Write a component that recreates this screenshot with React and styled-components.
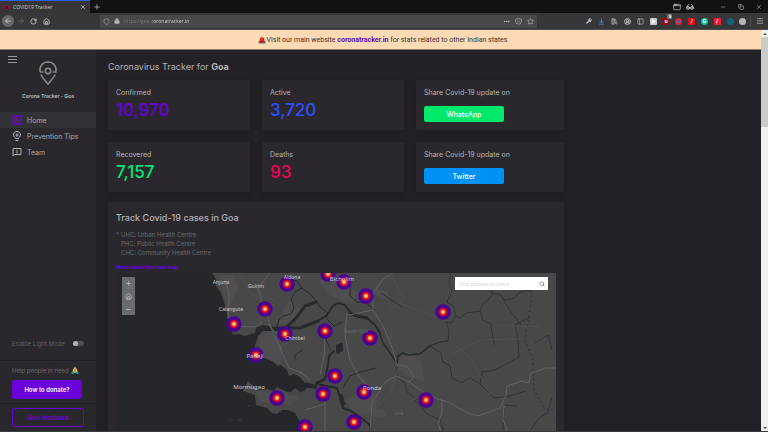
import React, { useState } from 'react';
import styled, { createGlobalStyle, css } from 'styled-components';
import {
  ArrowLeft,
  ArrowRight,
  RotateCw,
  House,
  Shield,
  Lock,
  Ellipsis,
  Star,
  Wrench,
  ArrowDownToLine,
  LibraryBig,
  CircleUserRound,
  PanelLeft,
  Menu,
  Minus,
  Copy,
  X,
  Plus,
  Search,
  Play,
  Glasses,
  AppWindow,
  Pocket
} from 'lucide-react';

const stats = [
  [
    { label: 'Confirmed', value: '10,970', color: '#6a00e0' },
    { label: 'Active', value: '3,720', color: '#304ffe' },
    { share: 'WhatsApp', color: '#00e96a' }
  ],
  [
    { label: 'Recovered', value: '7,157', color: '#00e676' },
    { label: 'Deaths', value: '93', color: '#f50057' },
    { share: 'Twitter', color: '#0091f7' }
  ]
];

const hotspots = [
  [287, 284], [328, 274], [344, 282], [366, 296], [265, 309], [234, 324],
  [443, 312], [285, 334], [325, 331], [370, 338], [256, 355], [335, 376],
  [323, 394], [364, 392], [277, 398], [426, 400], [305, 427], [354, 422]
];

const places = [
  { name: 'Anjuna', x: 221, y: 284, size: 5 },
  { name: 'Guirim', x: 256, y: 288, size: 5 },
  { name: 'Aldona', x: 292, y: 279, size: 5 },
  { name: 'Bicholim', x: 342, y: 281, size: 6 },
  { name: 'Calangute', x: 231, y: 311, size: 5 },
  { name: 'Chimbel', x: 295, y: 340, size: 5 },
  { name: 'Panaji', x: 255, y: 358, size: 6 },
  { name: 'Mormugao', x: 249, y: 389, size: 6 },
  { name: 'Ponda', x: 372, y: 390, size: 6 },
  { name: 'North Goa', x: 356, y: 333, size: 5, faint: true },
  { name: 'GOA', x: 399, y: 415, size: 4, faint: true }
];

const land =
  'M212 273 L216 279 L216 286 L221 293 L224 302 L227 313 L229 322 L231 330 L233 335 L239 334 L244 336 L255 333 L256 328 L263 325 L272 327 L275 331 L263 331 L258 336 L256 342 L254 349 L255 360 L261 358 L265 358 L272 361 L278 366 L281 365 L287 370 L289 376 L294 374 L300 377 L304 382 L313 384 L316 388 L307 388 L304 391 L300 392 L295 388 L291 392 L287 392 L277 387 L274 391 L267 389 L259 390 L251 384 L248 381 L245 387 L243 391 L255 395 L256 405 L267 408 L272 413 L277 414 L282 410 L288 410 L295 413 L300 422 L303 432 L312 455 L330 520 H600 V273 Z';

function GoaMap() {
  return (
    <MapArt viewBox="116 273 440 200" preserveAspectRatio="xMinYMin slice" aria-label="Map of Goa">
      <rect x="116" y="273" width="600" height="260" fill="#25272b" />
      <path d={land} fill="#484849" />
      {/* built up areas */}
      <g fill="#4f4d4f">
        <path d="M220 275 h14 l4 14 l-8 18 l-6 -10 Z M258 336 l14 -4 l12 18 l-4 14 l-20 -8 Z M256 392 l20 0 l24 5 l-10 8 l-30 -3 Z" />
        <path d="M318 280 l12 -6 l10 12 l20 6 l-8 12 l-22 -8 Z M400 358 l10 -5 l12 9 l2 20 l-16 -6 l-12 -8 Z M345 400 l22 -12 l12 8 l-6 16 l-18 4 Z" />
        <path d="M290 300 l12 10 l-14 14 h-14 Z M372 288 l14 4 l6 8 l-14 -2 Z M370 410 l14 0 l3 6 l-14 2 Z" />
      </g>
      <g fill="#3a3b3d">
        <path d="M228 420 l5 -1 v1 Z M237 420 l5 -1 l-2 2 Z" />
        <circle cx="249" cy="406" r="1" />
      </g>
      {/* rivers */}
      <g fill="none" stroke="#27292c" strokeLinejoin="round" strokeLinecap="round">
        <path strokeWidth="4" d="M258 329 L266 328 L276 329 L288 328" />
        <path strokeWidth="3" d="M288 328 L300 328 L313 323 L318 321" />
        <path strokeWidth="2" d="M318 321 L327 315 L333 306 L338 303 L345 305 L350 312" />
        <path strokeWidth="3" d="M350 313 L357 316 L367 318 M288 326 L296 318 L305 306 L316 302 M315 388 L317 383 L325 379" />
        <path strokeWidth="2" d="M325 379 L328 365 L329 356 L334 351 M367 318 L375 325 L380 333" />
        <path strokeWidth="1.5" d="M380 333 L382 341 L388 350 L397 363 L398 356 L403 353 L408 355 L420 354 L430 346" />
        <path strokeWidth="2" d="M316 384 L337 388 L340 398 L343 408 L351 411 L360 417 L370 425 L371 440" />
        <path strokeWidth="4" d="M338 346 V352 M341 345 V350 M341 396 L343 404" />
        <path d="M277 327 L279 319 L283 316 L291 314 L294 308 L291 299 L295 292 L302 288 L297 281 L288 278 M302 288 L309 293 L316 300 L320 307 L328 313 L326 318 L334 326 L342 322" />
        <path d="M430 346 L440 342 L448 341 M350 285 V296 L357 302 L366 303 L375 310 M295 360 V355 L302 350 M343 388 L350 376 L360 372 L376 368 M326 331 V340 L331 350" />
      </g>
      {/* streams and district borders */}
      <g fill="none" stroke="#323335" strokeLinejoin="round">
        <path d="M448 341 L449 330 L446 322 L451 323 L455 316 L460 318 L466 313 L480 311 L482 305 L489 299 L492 294 L500 294 L505 300 L514 298 L520 292 L532 290 L540 284" />
        <path d="M451 273 L449 283 L452 291 L447 302 L454 307 L456 316 M480 311 L483 320 L491 324 L494 345 M500 294 L509 309 L521 325 M492 294 V283 L480 278" />
        <path d="M430 346 L441 353 L442 361 L450 366 L452 378 L462 383 L470 378 L480 384 L482 372 L495 370 L510 362 L519 357 L518 340 L515 325 L530 317 M480 384 L494 398 L510 396 L526 391" />
        <path d="M381 293 L390 299 L402 307 M397 366 L397 377 L405 383 L407 392 L415 398 M415 400 L427 414 L440 420 L444 432 M535 343 L548 335 L552 350 M504 405 L517 406 M504 408 L503 432 M552 398 L548 412 L539 418 L528 434" />
        <path strokeDasharray="2 3" d="M527 281 L532 297 L528 322 L525 340 L533 360 L534 390 L545 409 L553 410" />
      </g>
      {/* roads */}
      <g fill="none" stroke="#626264" strokeLinejoin="round">
        <path d="M226 279 L229 296 L228 318 L230 326 L255 327 L262 322 M270 273 L258 288 L263 306 L268 319 L272 330 L281 350 L289 368 L302 373 L310 381 M268 324 L286 344" />
        <path d="M393 273 L383 279 L373 294 L373 310 L384 328 L393 350 L397 365 L407 366 L414 377 L409 382 L396 376 L385 382 L372 402 L370 432 M409 382 L425 393 L438 399 L448 402 L468 413 L478 416 L500 408 L506 395 L507 386 L522 381 L529 383 L530 374 L545 368 H556" />
        <path d="M325 386 V432 M325 404 L305 410 M325 338 L324 356 L320 375 M347 313 L345 335 L350 360 L359 377 L371 388 M373 310 L349 315 M442 400 L442 413 L438 423 L441 432 M504 405 L503 420 L508 432" />
      </g>
      <g fill="none" stroke="#505052">
        <path d="M390 273 L404 300 L388 310 M400 303 L430 315 L446 320 M450 341 L472 360 L490 394 M450 355 L480 340 L520 339 M240 275 L251 294 L275 300 M400 365 L390 393 L373 410 M495 325 L540 327" />
      </g>
      {hotspots.map(([x, y]) => (
        <g key={`${x}-${y}`}>
          <circle cx={x} cy={y} r="7.7" fill="#490095" />
          <circle cx={x} cy={y} r="4.6" fill="#96004e" />
          <circle cx={x} cy={y} r="3.8" fill="#dc1420" />
          <circle cx={x} cy={y} r="2.4" fill="#ff6a2b" />
          <circle cx={x} cy={y} r="1.5" fill="#ffd49a" />
        </g>
      ))}
      {places.map((p) => (
        <PlaceName key={p.name} x={p.x} y={p.y} $size={p.size} $faint={p.faint}>
          {p.name}
        </PlaceName>
      ))}
    </MapArt>
  );
}

function Siren() {
  return (
    <svg width="8" height="8" viewBox="0 0 16 16" aria-hidden="true">
      <path d="M3 12 L4 5 Q8 -2 12 5 L13 12 Z" fill="#e0241b" />
      <path d="M6 5 Q7 3 9 4" stroke="#ff8d7d" strokeWidth="1.5" fill="none" />
      <rect x="1" y="11" width="14" height="4" rx="1" fill="#70605f" />
      <path d="M2 11 h12" stroke="#b3151a" strokeWidth="2" />
    </svg>
  );
}

function Hands() {
  return (
    <svg width="8" height="8" viewBox="0 0 16 16" aria-hidden="true">
      <path d="M7.5 1 L4 7 L3 12 L7.5 14 Z M8.5 1 L12 7 L13 12 L8.5 14 Z" fill="#f7c65c" />
      <path d="M1 12 L4 10 L6 14 L5 16 H1 Z M15 12 L12 10 L10 14 L11 16 H15 Z" fill="#19a690" />
    </svg>
  );
}

function Logo() {
  return (
    <svg width="18" height="24" viewBox="0 0 18 24" fill="none" stroke="#8b8a8d" aria-hidden="true">
      <path strokeWidth="1.6" d="M1.2 11 C0 5 4 1 9 1 S18 5 16.8 11 H13.6 M1.2 11 H4.4 M1.8 13.5 C3.5 17 6.5 20 9 23 C11.5 20 14.5 17 16.2 13.5" />
      <circle cx="9" cy="10" r="2.7" strokeWidth="1.5" />
    </svg>
  );
}

function HomeIcon() {
  return (
    <svg width="10" height="10" viewBox="0 0 20 20" fill="none" aria-hidden="true">
      <rect x="2" y="2" width="16" height="16" rx="1" stroke="#6a00e0" strokeWidth="2.6" />
      <path d="M5 10 h3 l2 -3 l1 6 l2 -3 h2" stroke="#8d0b84" strokeWidth="2" />
    </svg>
  );
}

function TipsIcon() {
  return (
    <svg width="10" height="10" viewBox="0 0 20 20" fill="none" stroke="#b3b2b5" strokeWidth="2" aria-hidden="true">
      <path d="M7 14 C1 10 2 1 10 1 S19 10 13 14 V15 H7 Z M7 19 H13 M10 5 V12 M7 8 H13" />
    </svg>
  );
}

function TeamIcon() {
  return (
    <svg width="10" height="10" viewBox="0 0 20 20" fill="none" stroke="#b3b2b5" strokeWidth="2" aria-hidden="true">
      <path d="M2 3 H18 V15 H5 L2 18 Z M10 8 V13 M10 5 V7" />
    </svg>
  );
}

const extensions = [
  { name: 'uBlock Origin', color: '#8e0b10', text: 'u', count: '5' },
  { name: 'Search by image', color: '#3b6fd0', ring: '#d8283a', round: true },
  { name: 'Flash', color: '#d9101b', text: '/' },
  { name: 'Grammarly', color: '#12c28c', text: 'G', round: true },
  { name: 'Readability', color: '#ee1c35', text: '/' },
  { name: 'React Developer Tools', color: '#15627f', round: true },
  { name: 'Dark theme', color: '#b5b5b7', round: true }
];

function BrowserChrome() {
  const [url, setUrl] = useState('https://goa.coronatracker.in');
  return (
    <header>
      <TabStrip>
        <Tab>
          <Favicon />
          <TabTitle>COVID19 Tracker</TabTitle>
          <ChromeButton aria-label="Close tab" $width={8}>
            <X size={6} strokeWidth={3} />
          </ChromeButton>
        </Tab>
        <ChromeButton aria-label="New tab" $width={14}>
          <Plus size={8} />
        </ChromeButton>
        <WindowTools>
          <ChromeButton aria-label="Containers" $width={12}><AppWindow size={8} /></ChromeButton>
          <ChromeButton aria-label="Private window" $width={14}><Glasses size={8} strokeWidth={3} /></ChromeButton>
          <Spacer />
          <ChromeButton aria-label="Minimize" $width={18}><Minus size={6} /></ChromeButton>
          <ChromeButton aria-label="Restore" $width={18}><Copy size={6} /></ChromeButton>
          <ChromeButton aria-label="Close" $width={18}><X size={6} /></ChromeButton>
        </WindowTools>
      </TabStrip>
      <Toolbar>
        <Navigation>
          <BackButton aria-label="Back"><ArrowLeft size={8} /></BackButton>
          <ChromeButton aria-label="Forward" $width={13} $dim><ArrowRight size={8} /></ChromeButton>
          <ChromeButton aria-label="Reload" $width={13}><RotateCw size={7} strokeWidth={3} /></ChromeButton>
          <ChromeButton aria-label="Home page" $width={13}><House size={7} strokeWidth={3} /></ChromeButton>
        </Navigation>
        <AddressBar>
          <Shield size={7} />
          <Lock size={6} fill="currentColor" />
          <AddressInput aria-label="Address" value={url} onChange={(e) => setUrl(e.target.value)} />
          <ChromeButton aria-label="Page actions" $width={11}><Ellipsis size={7} strokeWidth={3} /></ChromeButton>
          <ChromeButton aria-label="Save to Pocket" $width={11}><Pocket size={7} /></ChromeButton>
          <ChromeButton aria-label="Bookmark" $width={11}><Star size={7} /></ChromeButton>
        </AddressBar>
        <Extensions>
          <ChromeButton aria-label="Developer" $width={12}><Wrench size={6} fill="currentColor" /></ChromeButton>
          <ChromeButton aria-label="Downloads" $width={12} $blue><ArrowDownToLine size={7} strokeWidth={3} /></ChromeButton>
          <ChromeButton aria-label="Library" $width={12}><LibraryBig size={7} /></ChromeButton>
          <ChromeButton aria-label="Account" $width={12}><CircleUserRound size={7} strokeWidth={3} /></ChromeButton>
          <ChromeButton aria-label="Sidebars" $width={12}><PanelLeft size={7} /></ChromeButton>
          <ChromeButton aria-label="Media" $width={12}>
            <Extension $color="#c9c9ca"><Play size={5} color="#fff" fill="#fff" /></Extension>
          </ChromeButton>
          {extensions.map((ext) => (
            <ChromeButton key={ext.name} aria-label={ext.name} $width={12}>
              <Extension $color={ext.color} $ring={ext.ring} $round={ext.round}>
                {ext.text}
                {ext.count && <Badge>{ext.count}</Badge>}
              </Extension>
            </ChromeButton>
          ))}
        </Extensions>
        <MenuSlot>
          <ChromeButton aria-label="Open menu" $width={12}><Menu size={8} /></ChromeButton>
        </MenuSlot>
      </Toolbar>
    </header>
  );
}

function Sidebar() {
  const [light, setLight] = useState(false);
  return (
    <Side>
      <MenuButton aria-label="Toggle navigation">
        <span />
        <span />
        <span />
      </MenuButton>
      <Brand>
        <Logo />
        <BrandName>Corona Tracker - Goa</BrandName>
      </Brand>
      <nav>
        <NavLink href="#home" $active><HomeIcon />Home</NavLink>
        <NavLink href="#tips"><TipsIcon />Prevention Tips</NavLink>
        <NavLink href="#team"><TeamIcon />Team</NavLink>
      </nav>
      <ModeRow>
        <label htmlFor="mode">Enable Light Mode</label>
        <Switch id="mode" type="checkbox" checked={light} onChange={() => setLight(!light)} />
      </ModeRow>
      <SideSection>
        <HelpText>Help people in need <Hands /></HelpText>
        <DonateButton>How to donate?</DonateButton>
      </SideSection>
      <SideSection>
        <FeedbackButton>Give feedback</FeedbackButton>
      </SideSection>
    </Side>
  );
}

function App() {
  return (
    <>
      <GlobalStyle />
      <Window>
        <BrowserChrome />
        <Viewport>
          <Page>
            <Banner>
              <Siren />
              <span>
                Visit our main website <a href="#main">coronatracker.in</a> for stats related to other Indian states
              </span>
            </Banner>
            <Body>
              <Sidebar />
              <Main>
                <Title>
                  Coronavirus Tracker for <b>Goa</b>
                </Title>
                <Stats>
                  {stats.flat().map((item) =>
                    item.share ? (
                      <Card key={item.share}>
                        <ShareLabel>Share Covid-19 update on</ShareLabel>
                        <ShareButton $color={item.color}>{item.share}</ShareButton>
                      </Card>
                    ) : (
                      <Card key={item.label}>
                        <CardLabel>{item.label}</CardLabel>
                        <CardValue $color={item.color}>{item.value}</CardValue>
                      </Card>
                    )
                  )}
                </Stats>
                <MapCard>
                  <MapTitle>Track Covid-19 cases in Goa</MapTitle>
                  <Notes>
                    <span>*</span>
                    <div>
                      UHC: Urban Health Centre
                      <br />
                      PHC: Public Health Centre
                      <br />
                      CHC: Community Health Centre
                    </div>
                  </Notes>
                  <HeatLink href="#heatmap">Understand the heat map</HeatLink>
                  <MapFrame>
                    <GoaMap />
                    <MapTools>
                      <ZoomControls>
                        <button aria-label="Zoom in"><Plus size={7} /></button>
                        <button aria-label="Default view"><House size={7} /></button>
                        <button aria-label="Zoom out"><Minus size={7} /></button>
                      </ZoomControls>
                      <SearchBox>
                        <input aria-label="Find address or place" placeholder="Find address or place" />
                        <button aria-label="Search"><Search size={6} /></button>
                      </SearchBox>
                    </MapTools>
                  </MapFrame>
                </MapCard>
              </Main>
            </Body>
          </Page>
          <Scrollbar aria-hidden="true">
            <ScrollArrow />
            <ScrollThumb />
            <ScrollArrow $down />
          </Scrollbar>
        </Viewport>
      </Window>
    </>
  );
}

export default App;

const GlobalStyle = createGlobalStyle`
  * {
    box-sizing: border-box;
  }
  body {
    margin: 0;
    background-color: #232126;
    color: #b4b3b6;
    font-family: Inter, 'Open Sans', sans-serif;
    font-size: 7px;
  }
  button {
    padding: 0;
    border: 0;
    background: none;
    color: inherit;
    font: inherit;
    cursor: pointer;
  }
  a {
    text-decoration: none;
  }
`;

const center = css`
  display: flex;
  align-items: center;
  justify-content: center;
`;

const Window = styled.div`
  display: flex;
  flex-direction: column;
  height: 100vh;
  overflow: hidden;
  border-bottom: 1px solid #3a393c;
`;

/* browser */

const TabStrip = styled.div`
  display: flex;
  height: 13px;
  background-color: #121213;
  color: #d0d0d0;
`;

const Tab = styled.div`
  display: flex;
  align-items: center;
  gap: 4px;
  width: 90px;
  padding: 0 3px 0 4px;
  border-top: 1px solid #2b5fe0;
  background-color: #353537;
`;

const Favicon = styled.span`
  width: 5px;
  height: 5px;
  border: 1px solid #a01329;
  border-radius: 2px;
  background-color: #2a1464;
`;

const TabTitle = styled.span`
  flex: 1;
  font-family: 'Open Sans', sans-serif;
  font-size: 5px;
`;

const ChromeButton = styled.button`
  ${center}
  flex-shrink: 0;
  width: ${({ $width }) => $width}px;
  color: ${({ $dim, $blue }) => ($dim ? '#79797b' : $blue ? '#3f7fe0' : '#c8c8ca')};
`;

const WindowTools = styled.div`
  display: flex;
  margin-left: auto;
`;

const Spacer = styled.span`
  width: 17px;
`;

const Toolbar = styled.div`
  display: flex;
  align-items: center;
  height: 17px;
  border-bottom: 1px solid #4b4a4d;
  background-color: #373739;
`;

const Navigation = styled.div`
  display: flex;
  align-items: center;
  width: 100px;
  padding-left: 2px;
`;

const BackButton = styled.button`
  ${center}
  width: 12px;
  height: 12px;
  border-radius: 50%;
  background-color: #68686b;
  color: #dedee0;
`;

const AddressBar = styled.div`
  display: flex;
  flex: 1;
  align-items: center;
  gap: 4px;
  height: 13px;
  padding: 0 1px 0 3px;
  background-color: #48484a;
  color: #b5b5b7;

  & > button + button {
    margin-left: -3px;
  }
`;

const AddressInput = styled.input`
  flex: 1;
  min-width: 0;
  padding: 0;
  border: 0;
  outline: 0;
  background: linear-gradient(90deg, #7d7d80 28px, #dcdcde 28px) text;
  color: transparent;
  font-family: 'Open Sans', sans-serif;
  font-size: 5px;
`;

const Extensions = styled.div`
  display: flex;
  justify-content: space-between;
  width: 166px;
  margin: 0 1px 0 46px;
`;

const Extension = styled.span`
  ${center}
  position: relative;
  width: 7px;
  height: 7px;
  border: ${({ $ring }) => ($ring ? `2px solid ${$ring}` : '0')};
  border-radius: ${({ $round }) => ($round ? '50%' : '1px')};
  background-color: ${({ $color }) => $color};
  color: #fff;
  font-size: 5px;
  font-weight: 700;
  line-height: 7px;
`;

const Badge = styled.span`
  position: absolute;
  top: -4px;
  right: -3px;
  width: 5px;
  border-radius: 1px;
  background-color: #737376;
  font-size: 4px;
  line-height: 5px;
`;

const MenuSlot = styled.div`
  padding: 2px 2px 2px 3px;
  border-left: 1px solid #4b4b4e;
`;

const Viewport = styled.div`
  display: flex;
  flex: 1;
  min-height: 0;
`;

const Scrollbar = styled.div`
  display: flex;
  flex-direction: column;
  width: 7px;
  background-color: #f0f0f0;
`;

const ScrollArrow = styled.span`
  ${center}
  height: 7px;
  margin-top: ${({ $down }) => ($down ? 'auto' : '0')};

  &::before {
    content: '';
    border: 2px solid transparent;
    border-top-width: ${({ $down }) => ($down ? '2px' : '0')};
    border-bottom-width: ${({ $down }) => ($down ? '0' : '2px')};
    border-top-color: #505050;
    border-bottom-color: #505050;
  }
`;

const ScrollThumb = styled.span`
  height: 90px;
  background-color: #cbcbcb;
`;

/* page */

const Page = styled.div`
  display: flex;
  flex: 1;
  flex-direction: column;
  min-width: 0;
  overflow: hidden;
`;

const Banner = styled.div`
  ${center}
  gap: 1px;
  flex-shrink: 0;
  height: 20px;
  padding-left: 4px;
  border-bottom: 1px solid #8d7a6b;
  background-color: #ffdab5;
  color: #33302f;
  font-family: Roboto, sans-serif;
  font-size: 7px;

  a {
    color: #5c0bb5;
    font-weight: 700;
  }
`;

const Body = styled.div`
  display: flex;
  flex: 1;
  min-height: 0;
`;

const Side = styled.aside`
  display: flex;
  flex-direction: column;
  flex-shrink: 0;
  width: 96px;
  background-color: #2a282d;
`;

const MenuButton = styled.button`
  display: flex;
  flex-direction: column;
  gap: 2px;
  width: 9px;
  margin: 6px 0 0 8px;

  span {
    width: 100%;
    height: 1px;
    background-color: #9a999c;
  }
`;

const Brand = styled.div`
  display: flex;
  flex-direction: column;
  align-items: center;
  gap: 7px;
  height: 51px;
  margin-top: -2px;
`;

const BrandName = styled.div`
  font-size: 5px;
  font-weight: 700;
  line-height: 8px;
`;

const NavLink = styled.a`
  display: flex;
  align-items: center;
  gap: 5px;
  height: 16px;
  padding-left: 12px;
  background-color: ${({ $active }) => ($active ? '#323236' : 'transparent')};
  color: #a9a8ab;
  font-size: 7px;
`;

const ModeRow = styled.div`
  display: flex;
  align-items: center;
  justify-content: space-between;
  height: 33px;
  margin-top: auto;
  padding: 0 12px;
  color: #5f5e61;
  font-size: 6px;
`;

const Switch = styled.input`
  appearance: none;
  width: 11px;
  height: 5px;
  margin: 0;
  border-radius: 3px;
  background-color: #515053;

  &::before {
    content: '';
    display: block;
    width: 5px;
    height: 5px;
    border-radius: 50%;
    background-color: #b5b4b6;
  }
  &:checked::before {
    margin-left: 6px;
  }
`;

const SideSection = styled.div`
  padding: 4px 12px;
  border-top: 1px solid #201e22;
`;

const HelpText = styled.div`
  display: flex;
  align-items: center;
  gap: 2px;
  height: 10px;
  margin-bottom: 5px;
  color: #6a696c;
  font-size: 6px;
`;

const DonateButton = styled.button`
  display: block;
  width: 70px;
  height: 19px;
  border-radius: 2px;
  background-color: #6a00da;
  color: #fff;
  font-size: 6px;
  font-weight: 600;
`;

const FeedbackButton = styled.button`
  display: block;
  width: 72px;
  height: 19px;
  border: 1px solid #6200d6;
  border-radius: 2px;
  color: #6a00e0;
  font-size: 6px;
  font-weight: 600;
`;

const Main = styled.main`
  flex: 1;
  max-width: 480px;
  padding: 10px 12px;
`;

const Title = styled.h1`
  margin: 0 0 6px;
  font-size: 9px;
  font-weight: 400;
  line-height: 14px;
`;

const Stats = styled.section`
  display: grid;
  grid-template-columns: 142fr 142fr 148fr;
  gap: 12px;
`;

const panel = css`
  border-radius: 2px;
  background-color: #2a282d;
  box-shadow: 0 2px 6px rgba(0, 0, 0, 0.15);
`;

const Card = styled.div`
  ${panel}
  height: 50px;
  padding: 8px;
`;

const CardLabel = styled.div`
  font-size: 7px;
  line-height: 10px;
`;

const CardValue = styled.div`
  color: ${({ $color }) => $color};
  font-size: 17px;
  font-weight: 500;
  line-height: 24px;
`;

const ShareLabel = styled.div`
  margin-bottom: 8px;
  font-size: 7px;
  line-height: 10px;
`;

const ShareButton = styled.button`
  width: 80px;
  height: 16px;
  border-radius: 2px;
  background-color: ${({ $color }) => $color};
  color: #fff;
  font-size: 7px;
  font-weight: 500;
`;

const MapCard = styled.section`
  ${panel}
  margin-top: 10px;
  padding: 9px 8px;
`;

const MapTitle = styled.h2`
  margin: 0 0 5px;
  font-size: 9px;
  font-weight: 500;
  line-height: 14px;
`;

const Notes = styled.div`
  display: flex;
  gap: 2px;
  color: #69686b;
  font-size: 6px;
  line-height: 9px;
`;

const HeatLink = styled.a`
  display: block;
  margin: 7px 0 2px;
  color: #6a00e0;
  font-size: 5px;
  font-weight: 700;
  line-height: 7px;
`;

const MapFrame = styled.div`
  position: relative;
  height: 200px;
  overflow: hidden;
`;

const MapArt = styled.svg`
  display: block;
  width: 100%;
  height: 100%;
`;

const PlaceName = styled.text`
  fill: ${({ $faint }) => ($faint ? '#6c6c6f' : '#cfcfd1')};
  font-family: 'Noto Sans', sans-serif;
  font-size: ${({ $size }) => $size}px;
  text-anchor: middle;
`;

const MapTools = styled.div`
  position: absolute;
  inset: 4px 8px auto 6px;
  display: flex;
  align-items: flex-start;
  justify-content: space-between;
`;

const ZoomControls = styled.div`
  display: flex;
  flex-direction: column;
  gap: 1px;
  width: 13px;
  background-color: #66676b;
  color: #d4d4d6;

  button {
    ${center}
    height: 12px;
    background-color: #6b6c70;
  }
`;

const SearchBox = styled.div`
  display: flex;
  width: 93px;
  height: 13px;
  background-color: #fff;
  color: #555;

  input {
    flex: 1;
    min-width: 0;
    padding: 0 4px;
    border: 0;
    background: none;
    font-family: 'Noto Sans', sans-serif;
    font-size: 5px;
  }
  input::placeholder {
    color: #d5d5d5;
  }
  button {
    ${center}
    width: 13px;
  }
`;
